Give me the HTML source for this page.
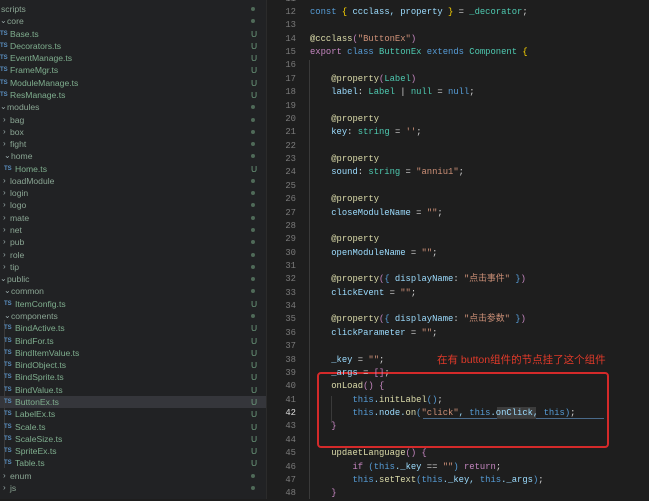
<!DOCTYPE html>
<html><head><meta charset="utf-8"><style>
body{margin:0;width:649px;height:499px;overflow:hidden;background:#1e1e1e;position:relative}
#sb{position:absolute;left:0;top:0;width:266px;height:499px;background:#212224}
.r{position:absolute;left:0;width:266px;height:12px;font:8.6px "Liberation Sans",sans-serif;color:#7fae8e;white-space:nowrap;line-height:12px}
.r .t{position:absolute;font:bold 6px "Liberation Sans",sans-serif;color:#5a8fc0;top:0;line-height:12px}
.r .u{position:absolute;left:251px;color:#6f9f80;font-size:8.5px}
.r .d{position:absolute;left:251px;top:4px;width:4px;height:4px;border-radius:2px;background:#4f6a58}
.r .c{position:absolute;color:#9aa;font-size:8px}
.f{color:#8aa593}
.l{position:absolute;left:266px;width:383px;height:13.4px;font:8.85px "Liberation Mono","Noto Sans CJK SC",monospace;line-height:13.4px;white-space:pre;color:#9cdcfe}
.n{position:absolute;left:0;width:30px;text-align:right;color:#7a7a7a}
.cd{position:absolute;left:44px}
.k{color:#569cd6}.p{color:#c586c0}.g{color:#4ec9b0}.s{color:#ce9178}.y{color:#dcdcaa}.w{color:#d4d4d4}.b{color:#ffd700}.v{color:#9cdcfe}
</style></head><body>
<div id="sb"></div>
<div style="position:absolute;left:0;top:396px;width:266px;height:12px;background:#35363b"></div>
<div style="position:absolute;left:266px;top:0;width:1px;height:499px;background:#2b2b2b"></div>
<div style="position:absolute;left:309px;top:60px;width:1px;height:439px;background:#3a3a3a"></div>
<div style="position:absolute;left:331px;top:396px;width:1px;height:27px;background:#3a3a3a"></div>
<div style="position:absolute;left:4px;top:320px;width:1px;height:148px;background:#3a3a3a"></div>
<div id="rows"></div>
<div style="position:absolute;left:317px;top:372px;width:288px;height:72px;border:2px solid #d42a2a;border-radius:4px"></div>
<div style="position:absolute;left:437px;top:352px;font:10.5px 'Liberation Sans','Noto Sans CJK SC',sans-serif;color:#e03a2a;white-space:nowrap">在有 button组件的节点挂了这个组件</div>
<div style="position:absolute;left:423px;top:418px;width:181px;height:1px;background:#4a6a8a"></div>
<div style="position:absolute;left:497px;top:407px;width:39px;height:12px;background:#3c3c3c"></div>
<div id="code"></div>
<script>
var R=[["scripts",0,"d"],["core",1,"d","v"],["Base.ts",0,"u","t"],["Decorators.ts",0,"u","t"],["EventManage.ts",0,"u","t"],["FrameMgr.ts",0,"u","t"],["ModuleManage.ts",0,"u","t"],["ResManage.ts",0,"u","t"],["modules",1,"d","v"],["bag",2,"d",">"],["box",2,"d",">"],["fight",2,"d",">"],["home",2,"d","v"],["Home.ts",4,"u","t"],["loadModule",2,"d",">"],["login",2,"d",">"],["logo",2,"d",">"],["mate",2,"d",">"],["net",2,"d",">"],["pub",2,"d",">"],["role",2,"d",">"],["tip",2,"d",">"],["public",1,"d","v"],["common",2,"d","v"],["ItemConfig.ts",4,"u","t"],["components",2,"d","v"],["BindActive.ts",4,"u","t"],["BindFor.ts",4,"u","t"],["BindItemValue.ts",4,"u","t"],["BindObject.ts",4,"u","t"],["BindSprite.ts",4,"u","t"],["BindValue.ts",4,"u","t"],["ButtonEx.ts",4,"u","t"],["LabelEx.ts",4,"u","t"],["Scale.ts",4,"u","t"],["ScaleSize.ts",4,"u","t"],["SpriteEx.ts",4,"u","t"],["Table.ts",4,"u","t"],["enum",2,"d",">"],["js",2,"d",">"]];
var h="";R.forEach(function(r,i){var y=3+i*12.28;var x=[1,6,10,10,15][r[1]];var ic="";
if(r[3]=="v"){ic='<span class="c" style="left:'+(x-6)+'px">⌄</span>';x+=1;}
else if(r[3]==">"){ic='<span class="c" style="left:'+(x-7)+'px">›</span>';}
if(r[3]=="t"&&r[1]==0){x=10;ic='<span class="t" style="left:0px">TS</span>';}
if(r[3]=="t"&&r[1]==4){x=15;ic='<span class="t" style="left:4px">TS</span>';}
h+='<div class="r'+(r[3]=="t"?"":" f")+'" style="top:'+y+'px">'+ic+'<span style="position:absolute;left:'+x+'px">'+r[0]+'</span>'+(r[2]=="u"?'<span class="u">U</span>':'<span class="d"></span>')+'</div>';});
document.getElementById("rows").innerHTML=h;
var C={12:'<span class="k">const</span> <span class="b">{</span> ccclass, property <span class="b">}</span> <span class="w">=</span> <span class="g">_decorator</span><span class="w">;</span>',
14:'<span class="y">@ccclass</span><span class="p">(</span><span class="s">"ButtonEx"</span><span class="p">)</span>',
15:'<span class="p">export</span> <span class="k">class</span> <span class="g">ButtonEx</span> <span class="k">extends</span> <span class="g">Component</span> <span class="b">{</span>',
17:'    <span class="y">@property</span><span class="p">(</span><span class="g">Label</span><span class="p">)</span>',
18:'    label<span class="w">:</span> <span class="g">Label</span> <span class="w">|</span> <span class="g">null</span> <span class="w">=</span> <span class="k">null</span><span class="w">;</span>',
20:'    <span class="y">@property</span>',21:'    key<span class="w">:</span> <span class="g">string</span> <span class="w">=</span> <span class="s">\'\'</span><span class="w">;</span>',
23:'    <span class="y">@property</span>',24:'    sound<span class="w">:</span> <span class="g">string</span> <span class="w">=</span> <span class="s">"anniu1"</span><span class="w">;</span>',
26:'    <span class="y">@property</span>',27:'    closeModuleName <span class="w">=</span> <span class="s">""</span><span class="w">;</span>',
29:'    <span class="y">@property</span>',30:'    openModuleName <span class="w">=</span> <span class="s">""</span><span class="w">;</span>',
32:'    <span class="y">@property</span><span class="p">(</span><span class="k">{</span> displayName<span class="w">:</span> <span class="s">"点击事件"</span> <span class="k">}</span><span class="p">)</span>',33:'    clickEvent <span class="w">=</span> <span class="s">""</span><span class="w">;</span>',
35:'    <span class="y">@property</span><span class="p">(</span><span class="k">{</span> displayName<span class="w">:</span> <span class="s">"点击参数"</span> <span class="k">}</span><span class="p">)</span>',36:'    clickParameter <span class="w">=</span> <span class="s">""</span><span class="w">;</span>',
38:'    _key <span class="w">=</span> <span class="s">""</span><span class="w">;</span>',39:'    _args <span class="w">=</span> <span class="p">[]</span><span class="w">;</span>',
40:'    <span class="y">onLoad</span><span class="p">()</span> <span class="p">{</span>',41:'        <span class="k">this</span>.<span class="y">initLabel</span><span class="k">()</span><span class="w">;</span>',
42:'        <span class="k">this</span>.node.<span class="y">on</span><span class="k">(</span><span class="s">"click"</span>, <span class="k">this</span>.onClick, <span class="k">this</span><span class="k">)</span><span class="w">;</span>',43:'    <span class="p">}</span>',
45:'    <span class="y">updaetLanguage</span><span class="p">()</span> <span class="p">{</span>',46:'        <span class="p">if</span> <span class="k">(</span><span class="k">this</span>._key <span class="w">==</span> <span class="s">""</span><span class="k">)</span> <span class="p">return</span><span class="w">;</span>',
47:'        <span class="k">this</span>.<span class="y">setText</span><span class="k">(</span><span class="k">this</span>._key, <span class="k">this</span>._args<span class="k">)</span><span class="w">;</span>',48:'    <span class="p">}</span>'};
var c="";for(var i=11;i<=48;i++){var y=-7.4+(i-11)*13.37;c+='<div class="l" style="top:'+y+'px"><span class="n" style="left:0;width:30px;'+(i==42?'color:#ddd':'')+'">'+i+'</span><span class="cd">'+(C[i]||'')+'</span></div>';}
document.getElementById("code").innerHTML=c;
</script>
</body></html>
